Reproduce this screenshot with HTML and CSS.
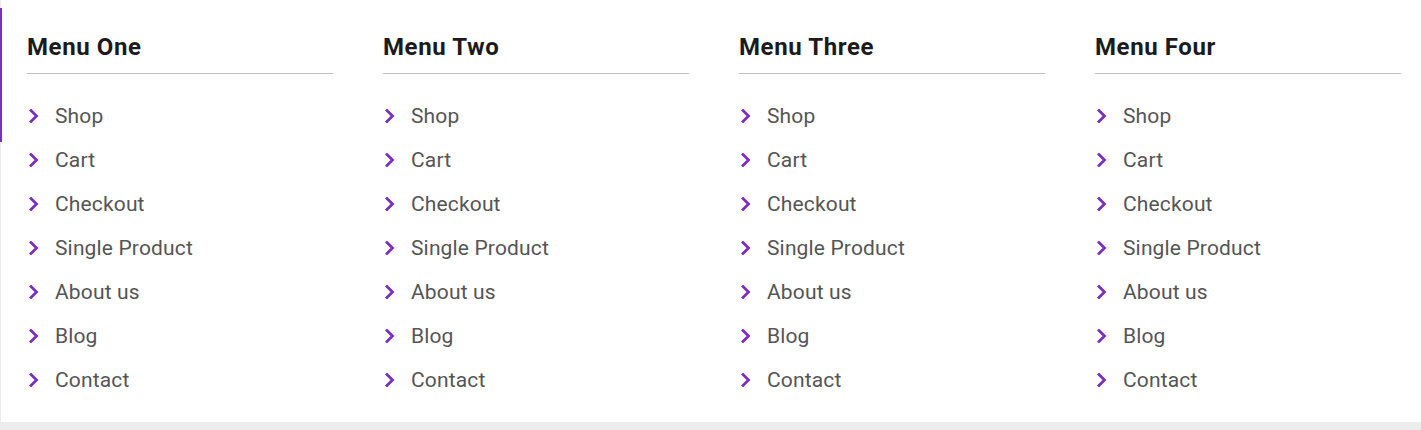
FILE: index.html
```html
<!DOCTYPE html>
<html>
<head>
<meta charset="utf-8">
<link rel="stylesheet" href="styles.css">
</head>
<body>
<div class="page">
  <div class="accent"></div>
  <div class="footer">
    <div class="col">
      <h3 class="title">Menu One</h3>
      <ul class="menu">
        <li><svg class="chev" viewBox="0 0 10 14"><path d="M2 1.5 L7.5 7 L2 12.5"/></svg>Shop</li>
        <li><svg class="chev" viewBox="0 0 10 14"><path d="M2 1.5 L7.5 7 L2 12.5"/></svg>Cart</li>
        <li><svg class="chev" viewBox="0 0 10 14"><path d="M2 1.5 L7.5 7 L2 12.5"/></svg>Checkout</li>
        <li><svg class="chev" viewBox="0 0 10 14"><path d="M2 1.5 L7.5 7 L2 12.5"/></svg>Single Product</li>
        <li><svg class="chev" viewBox="0 0 10 14"><path d="M2 1.5 L7.5 7 L2 12.5"/></svg>About us</li>
        <li><svg class="chev" viewBox="0 0 10 14"><path d="M2 1.5 L7.5 7 L2 12.5"/></svg>Blog</li>
        <li><svg class="chev" viewBox="0 0 10 14"><path d="M2 1.5 L7.5 7 L2 12.5"/></svg>Contact</li>
      </ul>
    </div>
    <div class="col">
      <h3 class="title">Menu Two</h3>
      <ul class="menu">
        <li><svg class="chev" viewBox="0 0 10 14"><path d="M2 1.5 L7.5 7 L2 12.5"/></svg>Shop</li>
        <li><svg class="chev" viewBox="0 0 10 14"><path d="M2 1.5 L7.5 7 L2 12.5"/></svg>Cart</li>
        <li><svg class="chev" viewBox="0 0 10 14"><path d="M2 1.5 L7.5 7 L2 12.5"/></svg>Checkout</li>
        <li><svg class="chev" viewBox="0 0 10 14"><path d="M2 1.5 L7.5 7 L2 12.5"/></svg>Single Product</li>
        <li><svg class="chev" viewBox="0 0 10 14"><path d="M2 1.5 L7.5 7 L2 12.5"/></svg>About us</li>
        <li><svg class="chev" viewBox="0 0 10 14"><path d="M2 1.5 L7.5 7 L2 12.5"/></svg>Blog</li>
        <li><svg class="chev" viewBox="0 0 10 14"><path d="M2 1.5 L7.5 7 L2 12.5"/></svg>Contact</li>
      </ul>
    </div>
    <div class="col">
      <h3 class="title">Menu Three</h3>
      <ul class="menu">
        <li><svg class="chev" viewBox="0 0 10 14"><path d="M2 1.5 L7.5 7 L2 12.5"/></svg>Shop</li>
        <li><svg class="chev" viewBox="0 0 10 14"><path d="M2 1.5 L7.5 7 L2 12.5"/></svg>Cart</li>
        <li><svg class="chev" viewBox="0 0 10 14"><path d="M2 1.5 L7.5 7 L2 12.5"/></svg>Checkout</li>
        <li><svg class="chev" viewBox="0 0 10 14"><path d="M2 1.5 L7.5 7 L2 12.5"/></svg>Single Product</li>
        <li><svg class="chev" viewBox="0 0 10 14"><path d="M2 1.5 L7.5 7 L2 12.5"/></svg>About us</li>
        <li><svg class="chev" viewBox="0 0 10 14"><path d="M2 1.5 L7.5 7 L2 12.5"/></svg>Blog</li>
        <li><svg class="chev" viewBox="0 0 10 14"><path d="M2 1.5 L7.5 7 L2 12.5"/></svg>Contact</li>
      </ul>
    </div>
    <div class="col">
      <h3 class="title">Menu Four</h3>
      <ul class="menu">
        <li><svg class="chev" viewBox="0 0 10 14"><path d="M2 1.5 L7.5 7 L2 12.5"/></svg>Shop</li>
        <li><svg class="chev" viewBox="0 0 10 14"><path d="M2 1.5 L7.5 7 L2 12.5"/></svg>Cart</li>
        <li><svg class="chev" viewBox="0 0 10 14"><path d="M2 1.5 L7.5 7 L2 12.5"/></svg>Checkout</li>
        <li><svg class="chev" viewBox="0 0 10 14"><path d="M2 1.5 L7.5 7 L2 12.5"/></svg>Single Product</li>
        <li><svg class="chev" viewBox="0 0 10 14"><path d="M2 1.5 L7.5 7 L2 12.5"/></svg>About us</li>
        <li><svg class="chev" viewBox="0 0 10 14"><path d="M2 1.5 L7.5 7 L2 12.5"/></svg>Blog</li>
        <li><svg class="chev" viewBox="0 0 10 14"><path d="M2 1.5 L7.5 7 L2 12.5"/></svg>Contact</li>
      </ul>
    </div>
  </div>
</div>
</body>
</html>
```

FILE: styles.css
```css
html, body {
  margin: 0;
  padding: 0;
  background: #ededed;
  font-family: Roboto, "Liberation Sans", sans-serif;
}
.page {
  position: relative;
  height: 430px;
}
.accent {
  position: absolute;
  left: 0;
  top: 8px;
  width: 2px;
  height: 134px;
  background: #7b2fc0;
}
.footer {
  background: #fff;
  border-left: 1px solid #ececec;
  height: 422px;
  box-sizing: border-box;
  padding: 33px 0 0 26px;
  display: grid;
  grid-template-columns: repeat(4, 306px);
  column-gap: 50px;
  align-items: start;
}
.title {
  margin: 0;
  font-size: 24px;
  letter-spacing: 0.6px;
  font-weight: 700;
  line-height: 28px;
  color: #1b1b1b;
  padding-bottom: 12px;
  border-bottom: 1px solid #bdbdbd;
}
.menu {
  list-style: none;
  margin: 20px 0 0;
  padding: 0;
}
.menu li {
  display: flex;
  align-items: center;
  height: 44px;
  font-size: 21px;
  letter-spacing: 0.15px;
  color: #555;
}
.chev {
  width: 10px;
  height: 14px;
  margin-left: 2px;
  margin-right: 16px;
  flex: none;
}
.chev path {
  fill: none;
  stroke: #7b2fc0;
  stroke-width: 2.8;
  stroke-linecap: square;
  stroke-linejoin: miter;
}
```
